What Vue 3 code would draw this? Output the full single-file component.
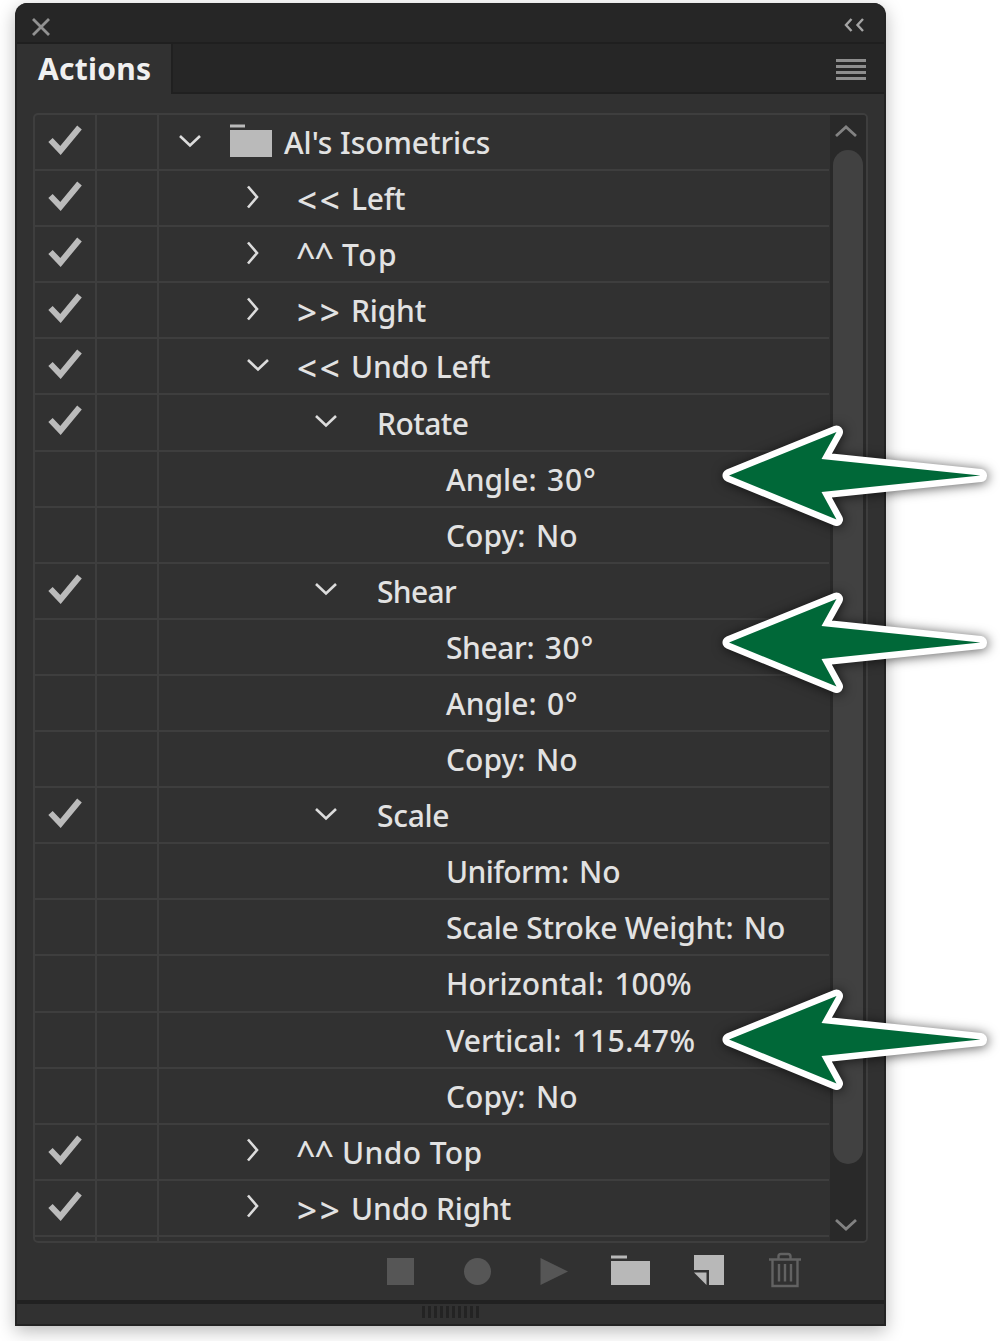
<script setup>
const rows = [
  { label: "Al's Isometrics", level: 0, checked: true, arrow: 'down', folder: true, track: -0.05 },
  { mark: '<<', label: 'Left', level: 1, checked: true, arrow: 'right', track: -0.3 },
  { mark: '^^', label: 'Top', level: 1, checked: true, arrow: 'right', track: 1.4 },
  { mark: '>>', label: 'Right', level: 1, checked: true, arrow: 'right', track: -0.2 },
  { mark: '<<', label: 'Undo Left', level: 1, checked: true, arrow: 'down', track: -0.2 },
  { label: 'Rotate', level: 2, checked: true, arrow: 'down', track: -0.55 },
  { label: 'Angle:', value: '30°', level: 3, track: 0, valueTrack: 0.8 },
  { label: 'Copy:', value: 'No', level: 3, track: 0, valueTrack: 0 },
  { label: 'Shear', level: 2, checked: true, arrow: 'down', track: -0.7 },
  { label: 'Shear:', value: '30°', level: 3, track: -0.4, valueTrack: 0.8 },
  { label: 'Angle:', value: '0°', level: 3, track: 0, valueTrack: 0.6 },
  { label: 'Copy:', value: 'No', level: 3, track: 0, valueTrack: 0 },
  { label: 'Scale', level: 2, checked: true, arrow: 'down', track: -0.3 },
  { label: 'Uniform:', value: 'No', level: 3, track: -0.6, valueTrack: 0 },
  { label: 'Scale Stroke Weight:', value: 'No', level: 3, track: -0.22, valueTrack: 0 },
  { label: 'Horizontal:', value: '100%', level: 3, track: 0, valueTrack: 0 },
  { label: 'Vertical:', value: '115.47%', level: 3, track: 0, valueTrack: 0.6 },
  { label: 'Copy:', value: 'No', level: 3, track: 0, valueTrack: 0 },
  { mark: '^^', label: 'Undo Top', level: 1, checked: true, arrow: 'right', track: 0.4 },
  { mark: '>>', label: 'Undo Right', level: 1, checked: true, arrow: 'right', track: -0.15 },
]
const pointers = [415, 582, 979]
</script>

<template>
  <main class="stage">
    <section class="panel">
      <header class="titlebar">
        <svg class="close" viewBox="0 0 18 18"><path d="M1 1L17 17M17 1L1 17" /></svg>
        <svg class="collapse" viewBox="0 0 20 14"><path d="M7.500 1L2 7L7.500 13M19 1L13.500 7L19 13" /></svg>
      </header>
      <nav class="tabs">
        <div class="tab">Actions</div>
        <div class="menu"><i v-for="n in 4" :key="n"></i></div>
      </nav>

      <div class="list">
        <div class="rows">
          <div v-for="(row, i) in rows" :key="i" class="row">
            <div class="cell">
              <svg v-if="row.checked" class="check" viewBox="0 0 34 30">
                <path d="M2.500 15L12.500 25.500L31.500 2.500" />
              </svg>
            </div>
            <div class="cell"></div>
            <div class="name" :class="'level-' + row.level">
              <span v-if="row.arrow" class="twist">
                <svg v-if="row.arrow === 'down'" class="down" viewBox="0 0 24 14"><path d="M2 2L12 11.500L22 2" /></svg>
                <svg v-else class="right" viewBox="0 0 14 24"><path d="M2 1.500L11 12L2 22.500" /></svg>
              </span>
              <svg v-if="row.folder" class="folder" viewBox="0 0 42 33">
                <path d="M0 0.500H15V3.500H0ZM0 6H42V33H0Z" />
              </svg>
              <span v-if="row.mark" class="label mark" :class="row.mark === '^^' ? 'caret' : 'angle'">{{ row.mark }}</span>
              <span class="label" :style="{ letterSpacing: row.track + 'px' }">{{ row.label }}</span>
              <span v-if="row.value" class="label value" :style="{ letterSpacing: row.valueTrack + 'px' }">{{ row.value }}</span>
            </div>
          </div>
          <div class="row">
            <div class="cell"></div>
            <div class="cell"></div>
          </div>
        </div>
        <div class="scrollbar">
          <svg viewBox="0 0 24 14"><path d="M2 12L12 3L22 12" /></svg>
          <div class="thumb"></div>
          <svg viewBox="0 0 24 14"><path d="M2 2L12 11L22 2" /></svg>
        </div>
      </div>

      <footer class="tools">
        <svg class="dim stop" viewBox="0 0 27 27"><rect width="27" height="27" /></svg>
        <svg class="dim record" viewBox="0 0 27 27"><circle cx="13.500" cy="13.500" r="13.500" /></svg>
        <svg class="dim play" viewBox="0 0 28 27"><path d="M0.500 0L28 13.500L0.500 27Z" /></svg>
        <svg class="lit set" viewBox="0 0 39 30"><path d="M0 0.500H16V3.500H0ZM0 6H39V30H0Z" /></svg>
        <svg class="lit create" viewBox="0 0 30 30"><path d="M0 0H30V30H15V15H0ZM0 17.500H12.500V30Z" /></svg>
        <svg class="trash" viewBox="0 0 34 36">
          <path d="M1 7.500H33M10.500 7V4.500Q10.500 2 13 2H20Q22.500 2 22.500 4.500V7M4.500 8V34H29.500V8M11 12V29.500M17 12V29.500M23 12V29.500" />
        </svg>
      </footer>
      <div class="grip"><i v-for="n in 10" :key="n"></i></div>
    </section>

    <svg v-for="y in pointers" :key="y" class="pointer" :style="{ top: y + 'px' }" viewBox="0 0 290 120">
      <path d="M19 60.500L126.500 17L111.500 44L270.500 60.500L111.500 77L126.500 104.500Z" />
    </svg>
  </main>
</template>

<style>
body {
  margin: 0;
  background: #fff;
}
</style>

<style scoped>
* {
  box-sizing: border-box;
}
svg {
  display: block;
  flex: none;
  fill: none;
}
.stage {
  position: relative;
  width: 1000px;
  height: 1341px;
  padding: 3px 0 0 15px;
  overflow: hidden;
  background: #fff;
  font-family: "Noto Sans", "Open Sans", sans-serif;
}
.panel {
  display: flex;
  flex-direction: column;
  width: 871px;
  height: 1323px;
  border: solid #232323;
  border-width: 0 2px 2px;
  border-radius: 12px 12px 0 0;
  background: #313131;
  box-shadow: 0 5px 18px rgba(0, 0, 0, 0.28);
  overflow: hidden;
}
.titlebar {
  display: flex;
  justify-content: space-between;
  align-items: flex-start;
  height: 41px;
  padding: 15px 20px 0 15px;
  border-bottom: 2px solid #1f1f1f;
  background: #262626;
}
.close {
  width: 18px;
  height: 18px;
  stroke: #929292;
  stroke-width: 2.8;
}
.collapse {
  width: 20px;
  height: 14px;
  stroke: #a5a5a5;
  stroke-width: 2.4;
}
.tabs {
  display: flex;
  justify-content: space-between;
  height: 50px;
  background: linear-gradient(#262626 48px, #202020 48px);
}
.tab {
  width: 156px;
  padding-left: 21px;
  border-right: 2px solid #202020;
  background: #313131;
  color: #f0f0f0;
  font-size: 30px;
  font-weight: 700;
  letter-spacing: 0.25px;
  line-height: 50px;
}
.menu {
  display: flex;
  flex-direction: column;
  gap: 3px;
  width: 30px;
  margin: 15px 18px 0 0;
}
.menu i {
  height: 3px;
  background: #8e8e8e;
}
.list {
  display: flex;
  justify-content: space-between;
  width: 835px;
  height: 1130px;
  margin: 19px 0 0 16px;
  border: 2px solid #3e3e3e;
  border-radius: 5px;
  overflow: hidden;
}
.rows {
  width: 794px;
}
.row {
  display: grid;
  grid-template-columns: 62px 62px 1fr;
  height: 56.1px;
  border-bottom: 2px solid #3e3e3e;
}
.cell {
  border-right: 2px solid #3e3e3e;
}
.check {
  width: 34px;
  height: 30px;
  margin: 10px 0 0 13px;
  stroke: #bbb;
  stroke-width: 6;
}
.name {
  display: flex;
  align-items: center;
}
.level-0 { padding-left: 19px; }
.level-1 { padding-left: 87px; }
.level-2 { padding-left: 155px; }
.level-3 { padding-left: 287px; }
.twist {
  width: 24px;
  margin-top: -3px;
}
.level-0 .twist { margin-right: 28px; }
.level-1 .twist { margin-right: 26px; }
.level-2 .twist { margin-right: 39px; }
.twist svg {
  stroke: #dcdcdc;
  stroke-width: 2.6;
}
.down {
  width: 24px;
  height: 14px;
}
.right {
  width: 14px;
  height: 24px;
}
.folder {
  width: 42px;
  height: 33px;
  margin: -4px 12px 0 0;
}
.folder path {
  fill: #bababa;
}
.label {
  padding-top: 2px;
  color: #e2e2e2;
  font-size: 30px;
  font-weight: 500;
  line-height: 52px;
  white-space: nowrap;
}
.mark {
  flex: none;
}
.angle {
  width: 54px;
  margin-left: 1px;
  padding-top: 4px;
  font-size: 35px;
  letter-spacing: 2.8px;
  line-height: 50px;
}
.caret {
  width: 46px;
  font-size: 34px;
  letter-spacing: -1px;
}
.value {
  margin-left: 10.5px;
}
.scrollbar {
  display: flex;
  flex-direction: column;
  align-items: center;
  justify-content: space-between;
  width: 36px;
  padding: 9px 4px 9px 0;
  background: #292929;
}
.scrollbar svg {
  width: 24px;
  height: 14px;
  stroke: #828282;
  stroke-width: 2.8;
}
.thumb {
  width: 30px;
  height: 1014px;
  margin: 0 0 42px 3px;
  border-radius: 15px;
  background: #414141;
}
.tools {
  display: flex;
  align-items: center;
  height: 57px;
  padding-left: 370px;
}
.dim {
  height: 27px;
  fill: #565656;
}
.stop,
.record {
  width: 27px;
}
.record { margin-left: 50px; }
.play {
  width: 28px;
  margin-left: 49px;
}
.lit {
  height: 30px;
  margin-bottom: 3px;
  fill: #b8b8b8;
}
.set {
  width: 39px;
  margin-left: 43px;
}
.create {
  width: 30px;
  margin-left: 44px;
}
.trash {
  width: 34px;
  height: 36px;
  margin: 0 0 3px 44px;
  stroke: #626262;
  stroke-width: 2.4;
}
.grip {
  display: flex;
  justify-content: center;
  gap: 3px;
  height: 24px;
  padding-top: 2px;
  border-top: 4px solid #212121;
}
.grip i {
  width: 3px;
  height: 12px;
  background: #232323;
}
.pointer {
  position: absolute;
  left: 710px;
  width: 290px;
  height: 120px;
  filter: drop-shadow(1px 1px 6px rgba(0, 0, 0, 0.65));
}
.pointer path {
  fill: #006838;
  stroke: #fff;
  stroke-width: 13px;
  stroke-linejoin: round;
  paint-order: stroke;
}
</style>
